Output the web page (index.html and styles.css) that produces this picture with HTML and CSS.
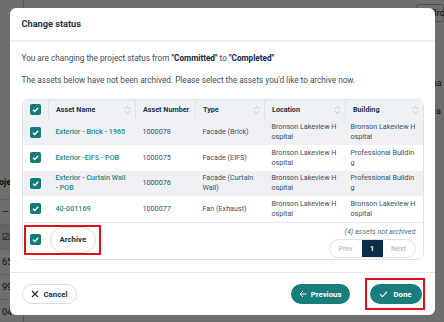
FILE: index.html
```html
<!DOCTYPE html>
<html>
  <head>
    <title>Change status</title>
    <meta name="viewport" content="width=device-width, initial-scale=1.0" />
    <link rel="stylesheet" href="styles.css">
  </head>

  <body>
    <div class="page">
      <div class="page-left">
        <div class="bg-label">Proje</div>
        <div class="bg-row">—</div>
        <div class="bg-row bg-shade">☑</div>
        <div class="bg-row">65</div>
        <div class="bg-row">99</div>
        <div class="bg-row">04</div>
      </div>
      <div class="page-right">
        <div class="bg-select">Bro</div>
        <div class="bg-text">Cha</div>
        <div class="bg-text">Yea</div>
      </div>
    </div>

    <div class="overlay">
      <div class="modal">
        <div class="modal-header">Change status</div>
        <div class="modal-body">
          <p class="intro">You are changing the project status from <b>"Committed"</b> to <b>"Completed"</b></p>
          <p class="intro">The assets below have not been archived. Please select the assets you'd like to archive now.</p>

          <div class="table-card">
            <table>
              <colgroup>
                <col class="col-check">
                <col class="col-name">
                <col class="col-number">
                <col class="col-type">
                <col class="col-location">
                <col class="col-building">
              </colgroup>
              <thead>
                <tr>
                  <th><span class="check"></span></th>
                  <th><div class="th-inner">Asset Name<span class="sort"></span></div></th>
                  <th><div class="th-inner">Asset Number<span class="sort"></span></div></th>
                  <th><div class="th-inner">Type<span class="sort"></span></div></th>
                  <th><div class="th-inner">Location<span class="sort"></span></div></th>
                  <th class="last"><div class="th-inner">Building<span class="sort"></span></div></th>
                </tr>
              </thead>
              <tbody>
                <tr>
                  <td><span class="check"></span></td>
                  <td class="name">Exterior - Brick - 1965</td>
                  <td>1000078</td>
                  <td>Facade (Brick)</td>
                  <td class="wrap">Bronson Lakeview Hospital</td>
                  <td class="wrap building">Bronson Lakeview Hospital</td>
                </tr>
                <tr>
                  <td><span class="check"></span></td>
                  <td class="name">Exterior -EIFS - POB</td>
                  <td>1000075</td>
                  <td>Facade (EIFS)</td>
                  <td class="wrap">Bronson Lakeview Hospital</td>
                  <td class="wrap building">Professional Building</td>
                </tr>
                <tr>
                  <td><span class="check"></span></td>
                  <td class="name">Exterior - Curtain Wall - POB</td>
                  <td>1000076</td>
                  <td>Facade (Curtain Wall)</td>
                  <td class="wrap">Bronson Lakeview Hospital</td>
                  <td class="wrap building">Professional Building</td>
                </tr>
                <tr>
                  <td><span class="check"></span></td>
                  <td class="name">40-001169</td>
                  <td>1000077</td>
                  <td>Fan (Exhaust)</td>
                  <td class="wrap">Bronson Lakeview Hospital</td>
                  <td class="wrap building">Bronson Lakeview Hospital</td>
                </tr>
              </tbody>
            </table>

            <div class="table-footer">
              <div class="highlight archive-group">
                <span class="check"></span>
                <button class="btn btn-outline">Archive</button>
              </div>
              <div class="footer-right">
                <div class="count">(4) assets not archived</div>
                <div class="pager">
                  <span class="page-btn muted">Prev</span>
                  <span class="page-btn active">1</span>
                  <span class="page-btn muted">Next</span>
                </div>
              </div>
            </div>
          </div>
        </div>

        <div class="modal-footer">
          <button class="btn btn-outline">
            <svg width="8" height="8" viewBox="0 0 8 8"><path d="M1 1L7 7M7 1L1 7" stroke="#1d3347" stroke-width="1.2" fill="none"/></svg>
            Cancel
          </button>
          <div class="spacer"></div>
          <button class="btn btn-teal btn-prev">
            <svg width="8" height="8" viewBox="0 0 8 8"><path d="M7.5 4H1M4 1L1 4L4 7" stroke="#fff" stroke-width="1" fill="none"/></svg>
            Previous
          </button>
          <div class="highlight done-group">
            <button class="btn btn-teal btn-done">
              <svg width="9" height="8" viewBox="0 0 9 8"><path d="M1 4.2L3.4 6.6L8 1.6" stroke="#fff" stroke-width="1.1" fill="none"/></svg>
              Done
            </button>
          </div>
        </div>
      </div>
    </div>
  </body>
</html>
```

FILE: styles.css
```css
* {
  box-sizing: border-box;
}
body {
  margin: 0;
  height: 322px;
  overflow: hidden;
  background: #fff;
  font-family: Roboto, "Noto Sans", sans-serif;
}

/* page behind the dialog */
.page {
  display: flex;
  justify-content: space-between;
  height: 322px;
  color: #222;
  font-size: 9px;
}
.page-left {
  width: 24px;
  padding-top: 177px;
  overflow: hidden;
  border-right: 1px solid #ccc;
}
.bg-label {
  font-weight: 700;
  height: 22px;
  margin-left: -10px;
}
.bg-row {
  height: 25px;
  line-height: 25px;
  padding-left: 2px;
  border-top: 1px solid #ddd;
}
.bg-shade {
  background: #e8e8e8;
}
.page-right {
  width: 28px;
  padding-top: 4px;
  overflow: hidden;
}
.bg-select {
  border: 1px solid #bbb;
  border-radius: 3px;
  height: 18px;
  line-height: 16px;
  padding-left: 14px;
  margin-bottom: 56px;
}
.bg-text {
  height: 28px;
  padding-left: 10px;
}

/* dialog */
.overlay {
  position: fixed;
  inset: 0;
  background: rgba(0, 0, 0, 0.57);
  display: flex;
  align-items: center;
  justify-content: center;
}
.modal {
  width: 425px;
  height: 307px;
  background: #fff;
  border-radius: 6px;
  display: flex;
  flex-direction: column;
}
.modal-header {
  height: 34px;
  padding: 0 12px;
  display: flex;
  align-items: center;
  font-size: 9.2px;
  font-weight: 700;
  color: #1d3347;
  border-bottom: 2px solid #eef0f3;
}
.modal-body {
  flex: 1;
  padding: 10px 11px 0 12px;
}
.intro {
  margin: 0;
  font-size: 8.2px;
  line-height: 12px;
  color: #3c4f63;
}
.intro b {
  color: #102a43;
}
.intro + .intro {
  margin-top: 10px;
}

.table-card {
  margin-top: 13px;
  border: 1px solid #dfe3e8;
  border-radius: 7px;
  overflow: hidden;
}
table {
  width: 100%;
  border-collapse: collapse;
  table-layout: fixed;
  font-size: 7.2px;
}
.col-check {
  width: 26px;
}
.col-name {
  width: 87px;
}
.col-number {
  width: 60px;
}
.col-type {
  width: 69px;
}
.col-location {
  width: 81px;
}
th {
  height: 20px;
  padding: 0 7px;
  background: #eef1f4;
  text-align: left;
  font-weight: 700;
  color: #1d3347;
  border-right: 1px solid #dfe4e9;
}
th.last {
  border-right: none;
}
.th-inner {
  display: flex;
  align-items: center;
  justify-content: space-between;
  white-space: nowrap;
}
.sort {
  width: 5px;
  height: 8px;
  margin-right: -2px;
  background:
    linear-gradient(135deg, transparent 45%, #c5ccd3 45%, #c5ccd3 60%, transparent 60%) left top / 3px 3px no-repeat,
    linear-gradient(225deg, transparent 45%, #c5ccd3 45%, #c5ccd3 60%, transparent 60%) right top / 3px 3px no-repeat,
    linear-gradient(45deg, transparent 45%, #c5ccd3 45%, #c5ccd3 60%, transparent 60%) left bottom / 3px 3px no-repeat,
    linear-gradient(315deg, transparent 45%, #c5ccd3 45%, #c5ccd3 60%, transparent 60%) right bottom / 3px 3px no-repeat;
}
td {
  height: 25.5px;
  padding: 0 7px;
  line-height: 10px;
  color: #3c4f63;
}
th:first-child,
td:first-child {
  padding: 0;
  text-align: center;
}
tbody tr:nth-child(odd) {
  background: #eef0f3;
}
.name {
  color: #1e8a85;
  font-weight: 500;
}
.wrap {
  word-break: break-all;
}
.building {
  padding: 0 5px 0 5px;
}

.check {
  display: inline-block;
  vertical-align: middle;
  width: 11px;
  height: 11px;
  border-radius: 2px;
  background: #137a77 url("data:image/svg+xml,%3Csvg xmlns='http://www.w3.org/2000/svg' width='11' height='11'%3E%3Cpath d='M3 5.7L4.8 7.4L8.2 3.8' stroke='white' stroke-width='1.5' fill='none'/%3E%3C/svg%3E") center no-repeat;
}

.table-footer {
  display: flex;
  justify-content: space-between;
  padding: 2px 7px 1px 1px;
  border-top: 1px solid #e6e9ed;
}
.highlight {
  border: 2px solid #e3101b;
  display: flex;
  align-items: center;
}
.archive-group {
  height: 30px;
  gap: 9px;
  padding: 0 3px 0 4px;
}
.footer-right {
  display: flex;
  flex-direction: column;
  align-items: flex-end;
  padding-top: 2px;
  gap: 2px;
}
.count {
  font-size: 7.2px;
  line-height: 10px;
  font-style: italic;
  color: #5b6b7a;
}
.pager {
  display: flex;
  height: 19px;
  border: 1px solid #dfe3e8;
  border-radius: 10px;
  overflow: hidden;
  font-size: 7.2px;
}
.page-btn {
  width: 32px;
  display: flex;
  align-items: center;
  justify-content: center;
}
.muted {
  color: #a7afb7;
}
.active {
  width: 21px;
  background: #0d2c48;
  color: #fff;
  font-weight: 700;
}

.btn {
  display: inline-flex;
  align-items: center;
  gap: 5px;
  height: 20px;
  padding: 0 10px;
  border-radius: 10px;
  font-family: Roboto, "Noto Sans", sans-serif;
  font-size: 7.8px;
  font-weight: 700;
  cursor: pointer;
}
.btn-outline {
  height: 26px;
  border-radius: 13px;
  padding: 0 9px;
  border: 1px solid #d9dee3;
  background: #fff;
  color: #1d3347;
}
.modal-footer .btn-outline {
  height: 20px;
  border-radius: 10px;
  padding: 0 9px 0 8px;
}
.btn-teal {
  border: none;
  background: #177e7b;
  color: #fff;
}
.btn-prev {
  padding: 0 9px 0 8px;
  gap: 4px;
}
.modal-footer {
  height: 43px;
  display: flex;
  align-items: center;
  padding: 1px 10px 0 12px;
  border-top: 1px solid #e5e8eb;
}
.spacer {
  flex: 1;
}
.done-group {
  margin-left: 15px;
  padding: 4px 1px 4px 3px;
}
.btn-done {
  padding: 0 10px 0 9px;
}
```
